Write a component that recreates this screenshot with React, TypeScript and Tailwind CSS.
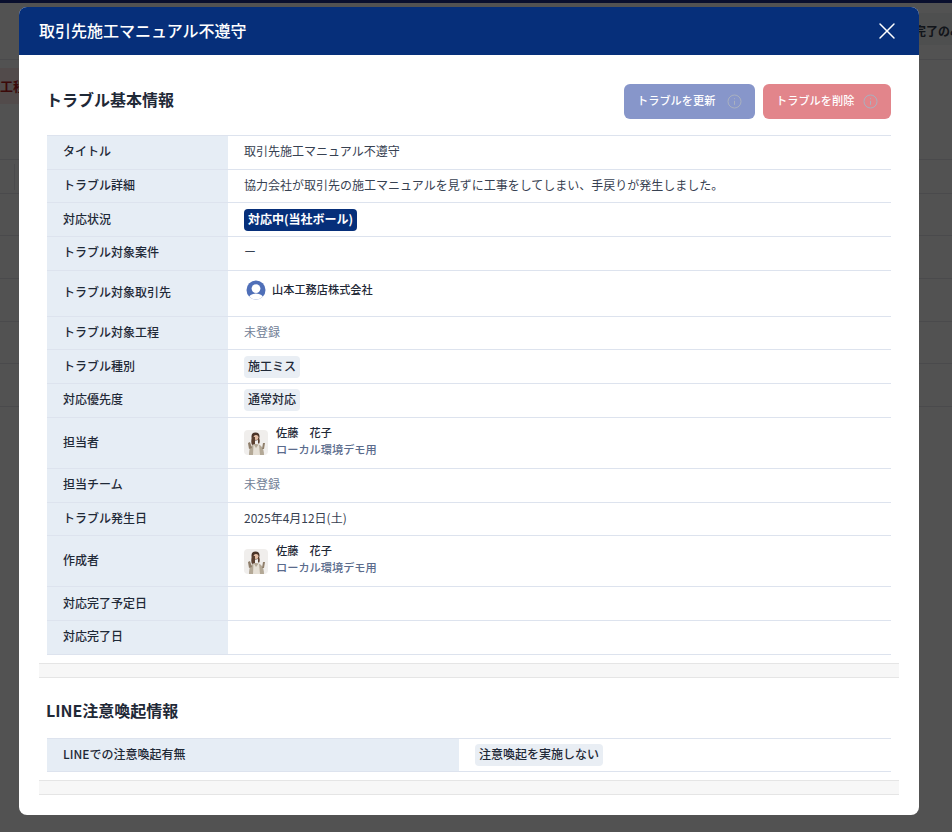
import { X } from 'lucide-react';

const font = { fontFamily: '"Noto Sans CJK JP", Inter, sans-serif' };

function Badge({ text, dark }: { text: string; dark?: boolean }) {
  return (
    <span
      className={`inline-block h-[22px] rounded-[4px] px-[4px] text-[12px] leading-[20px] ${
        dark ? 'bg-[#062f7a] font-bold text-white' : 'bg-[#e9eef4] font-medium text-[#1f2937]'
      }`}
    >
      {text}
    </span>
  );
}

function Txt({ children, muted }: { children: React.ReactNode; muted?: boolean }) {
  return <span className={`mb-[2px] ${muted ? 'text-[#718096]' : ''}`}>{children}</span>;
}

function Photo() {
  return (
    <svg width="24" height="25" viewBox="0 0 24 25" className="shrink-0 rounded-[4px]">
      <rect width="24" height="25" fill="#f0eeec" />
      <path d="M5 25c0-7 2-11 7-11s8 4 8 11z" fill="#b3a896" />
      <path d="M9.5 14l2.5 4 3-4 1 11H9z" fill="#e6e0d6" />
      <path d="M5 19l-1-6 2-1 2 6zM18 19l1-6 2 0-1 6z" fill="#8f7e6a" />
      <circle cx="11.5" cy="6.5" r="4" fill="#4a3428" />
      <circle cx="12" cy="7.5" r="2.5" fill="#e3bda4" />
      <path d="M8 7c-1 3-1 6 0 8l3-1V7zM15 8c1 2 1 4 0 6l-1-1V8z" fill="#5b4030" />
    </svg>
  );
}

function PersonIcon() {
  return (
    <svg width="20" height="20" viewBox="0 0 20 20" className="shrink-0">
      <defs>
        <clipPath id="c">
          <circle cx="10" cy="10" r="9.5" />
        </clipPath>
      </defs>
      <circle cx="10" cy="10" r="9.5" fill="#4f6fb8" />
      <g clipPath="url(#c)">
        <circle cx="10" cy="8.6" r="4.4" fill="#fff" />
        <ellipse cx="10" cy="19" rx="7.6" ry="5.6" fill="#fff" />
      </g>
    </svg>
  );
}

function User() {
  return (
    <div className="flex items-center gap-[8px]">
      <Photo />
      <div className="mb-[4px] text-[11.2px] font-medium leading-[17px]">
        <div className="text-[#1f2937]">佐藤　花子</div>
        <div className="text-[#5a6b8c]">ローカル環境デモ用</div>
      </div>
    </div>
  );
}

function InfoIcon() {
  return (
    <svg width="15" height="15" viewBox="0 0 15 15" fill="none" stroke="#a9b0bf" strokeWidth="1">
      <circle cx="7.5" cy="7.5" r="6.5" />
      <path d="M7.5 6.8v4M7.5 4.2v1" />
    </svg>
  );
}

const rows: { label: string; height: string; value?: React.ReactNode }[] = [
  { label: 'タイトル', height: 'h-[33.7px]', value: <Txt>取引先施工マニュアル不遵守</Txt> },
  {
    label: 'トラブル詳細',
    height: 'h-[33.7px]',
    value: <Txt>協力会社が取引先の施工マニュアルを見ずに工事をしてしまい、手戻りが発生しました。</Txt>,
  },
  { label: '対応状況', height: 'h-[33.7px]', value: <Badge text="対応中(当社ボール)" dark /> },
  { label: 'トラブル対象案件', height: 'h-[33.7px]', value: <Txt>ー</Txt> },
  {
    label: 'トラブル対象取引先',
    height: 'h-[46px]',
    value: (
      <div className="flex items-center gap-[6px] pb-[7px] pl-[2px]">
        <PersonIcon />
        <span className="text-[11.2px] font-medium text-[#1f2937]">山本工務店株式会社</span>
      </div>
    ),
  },
  { label: 'トラブル対象工程', height: 'h-[33.7px]', value: <Txt muted>未登録</Txt> },
  { label: 'トラブル種別', height: 'h-[33.7px]', value: <Badge text="施工ミス" /> },
  { label: '対応優先度', height: 'h-[33.7px]', value: <Badge text="通常対応" /> },
  { label: '担当者', height: 'h-[51px]', value: <User /> },
  { label: '担当チーム', height: 'h-[33.7px]', value: <Txt muted>未登録</Txt> },
  { label: 'トラブル発生日', height: 'h-[33.7px]', value: <Txt>2025年4月12日(土)</Txt> },
  { label: '作成者', height: 'h-[51px]', value: <User /> },
  { label: '対応完了予定日', height: 'h-[33.7px]' },
  { label: '対応完了日', height: 'h-[33.7px]' },
];

function Band() {
  return <div className="h-[15px] border-y border-[#e5e5e5] bg-[#f7f7f7]" />;
}

function Background() {
  return (
    <div className="h-[832px] overflow-hidden bg-white">
      <div className="h-[3px] bg-[#1e2f8f]" />
      <div className="flex h-[57px] justify-end border-b border-[#e5e7eb] pt-[10px]">
        <div className="h-[32px] w-[47px] overflow-hidden whitespace-nowrap bg-[#f3f4f6] pl-[9px] text-[12px] font-bold leading-[36px] text-[#374151]">
          完了のみ
        </div>
      </div>
      <div className="h-[100px] border-b border-[#e5e7eb] pt-[8px]">
        <div className="h-[36px] w-[24px] overflow-hidden whitespace-nowrap bg-[#fde8e8] text-right text-[13px] font-bold leading-[36px] text-[#b91c1c]">
          工程
        </div>
      </div>
      <div className="flex h-[34px] items-center border-b border-[#e5e7eb]">
        <div className="h-[26px] w-[15px] border-r border-[#e5e7eb]" />
      </div>
      {[42, 43, 43, 42, 43].map((h, i) => (
        <div key={i} className="border-b border-[#e5e7eb]" style={{ height: h }} />
      ))}
    </div>
  );
}

export default function App() {
  return (
    <div className="relative h-[832px] overflow-hidden" style={font}>
      <Background />
      <div className="absolute inset-0 bg-black/[0.68] pl-[19px] pt-[7px]">
        <div className="h-[808px] w-[900px] overflow-hidden rounded-[8px] bg-white">
          <div className="flex h-[48px] items-center justify-between bg-[#062f7a] pl-[20px] pr-[18px]">
            <h1 className="mb-[2px] text-[16px] font-medium text-white">取引先施工マニュアル不遵守</h1>
            <X size={28} strokeWidth={1.25} className="text-white" />
          </div>

          <div className="px-[20px]">
            <div className="flex h-[80px] items-center justify-between px-[8px] pt-[12px]">
              <h2 className="-ml-[1px] mb-[4px] text-[16px] font-bold text-[#1f2937]">トラブル基本情報</h2>
              <div className="flex gap-[8px]">
                <button className="flex h-[35px] w-[131px] items-center justify-between rounded-[6px] bg-[#8796ca] pl-[13px] pr-[13px] text-[11.2px] font-medium text-white">
                  <span className="mb-[2px]">トラブルを更新</span>
                  <InfoIcon />
                </button>
                <button className="flex h-[35px] w-[128px] items-center justify-between rounded-[6px] bg-[#e2858b] pl-[13px] pr-[13px] text-[11.2px] font-medium text-white">
                  <span className="mb-[2px]">トラブルを削除</span>
                  <InfoIcon />
                </button>
              </div>
            </div>

            <div className="mx-[8px] border-t border-[#dde3ee] text-[12px] text-[#374151]">
              {rows.map((r) => (
                <div key={r.label} className={`flex border-b border-[#dde3ee] ${r.height}`}>
                  <div className="flex w-[181px] shrink-0 items-center bg-[#e6edf5] pb-[2px] pl-[16px] font-medium text-[#1f2937]">
                    {r.label}
                  </div>
                  <div className="flex flex-1 items-center pl-[16px]">{r.value}</div>
                </div>
              ))}
            </div>

            <div className="mt-[8px]">
              <Band />
            </div>

            <h2 className="-ml-[1px] flex h-[60px] items-center px-[8px] pt-[5px] text-[16px] font-bold text-[#1f2937]">
              LINE注意喚起情報
            </h2>

            <div className="mx-[8px] flex h-[34px] border-y border-[#dde3ee] text-[12px]">
              <div className="flex w-[412px] shrink-0 items-center bg-[#e6edf5] pb-[2px] pl-[16px] font-medium text-[#1f2937]">
                LINEでの注意喚起有無
              </div>
              <div className="flex flex-1 items-center pl-[16px]">
                <Badge text="注意喚起を実施しない" />
              </div>
            </div>

            <div className="mt-[8px]">
              <Band />
            </div>
          </div>
        </div>
      </div>
    </div>
  );
}
